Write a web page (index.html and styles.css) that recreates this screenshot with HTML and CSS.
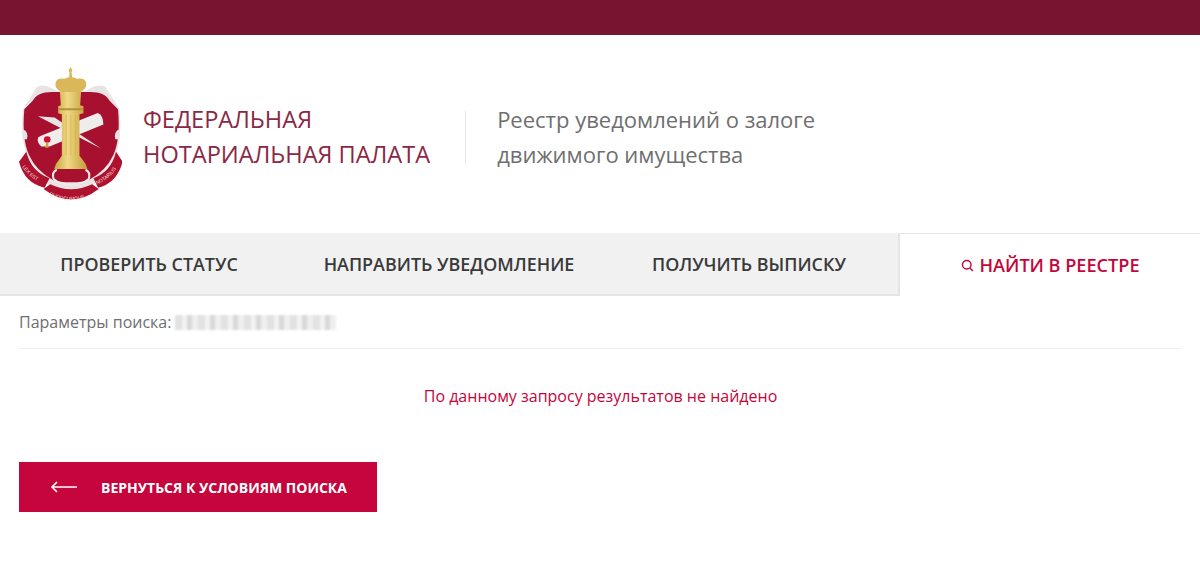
FILE: index.html
```html
<!DOCTYPE html>
<html lang="ru">
<head>
    <meta charset="UTF-8">
    <meta name="viewport" content="width=device-width, initial-scale=1.0">
    <title>Реестр уведомлений о залоге движимого имущества</title>
    <link rel="stylesheet" href="styles.css">
</head>
<body>
    <div class="top-bar"></div>

    <header class="header">
        <svg class="logo" viewBox="58 45 310 412" aria-hidden="true">
            <defs>
                <linearGradient id="gold" x1="0" x2="1" y1="0" y2="0">
                    <stop offset="0" stop-color="#c9a640"/>
                    <stop offset="0.4" stop-color="#f0d885"/>
                    <stop offset="1" stop-color="#c39c38"/>
                </linearGradient>
                <path id="ribbonLeft" d="M68 345 Q90 380 135 398"/>
                <path id="ribbonMid" d="M148 430 Q212 462 282 430"/>
                <path id="ribbonRight" d="M292 398 Q335 382 360 335"/>
            </defs>
            <!-- щит -->
            <path d="M112 104 Q135 95 160 110 L175 118 L255 118 L270 110 Q295 95 318 104 L340 140 L360 172 Q370 260 345 320 L290 390 L265 425 L215 430 L165 425 L140 390 L85 320 Q60 260 70 172 L90 140 Z" fill="#e8e4e4"/>
            <path d="M74 172 L100 146 Q112 118 165 120 L265 120 Q318 118 330 146 L356 172 Q364 260 342 310 Q320 358 268 385 Q250 392 215 392 Q180 392 160 385 Q110 358 88 310 Q66 260 74 172 Z" fill="#a8102f"/>
            <!-- завитки -->
            <path d="M172 354 Q156 360 162 382 Q180 398 215 400 Q250 398 268 382 Q274 360 258 354" fill="none" stroke="#eeeaea" stroke-width="6"/>
            <path d="M70 232 Q88 240 82 262 L68 262 Z M360 232 Q342 240 348 262 L362 262 Z" fill="#e8e4e4"/>
            <!-- перо -->
            <path d="M115 193 L165 197 L305 290 L170 222 Z" fill="#e6e4e4"/>
            <!-- свиток -->
            <path d="M128 250 L295 183 Q312 190 312 218 L150 284 L125 284 Q110 270 116 256 Z" fill="#efecec"/>
            <circle cx="143" cy="263" r="10" fill="#d01030"/>
            <path d="M140 272 L137 288 L147 288 L146 272 Z" fill="#c9a640"/>
            <!-- лента -->
            <path d="M80 300 Q95 360 150 380 L135 408 Q75 395 58 330 Z" fill="#af122e"/>
            <path d="M350 300 Q335 360 282 380 L296 408 Q352 395 370 330 Z" fill="#af122e"/>
            <path d="M132 412 L152 398 Q215 428 278 398 L298 412 Q215 475 132 412 Z" fill="#af122e"/>
            <text class="logo-motto"><textPath href="#ribbonLeft">LEX EST</textPath></text>
            <text class="logo-motto"><textPath href="#ribbonMid">QUODCUMQUE</textPath></text>
            <text class="logo-motto"><textPath href="#ribbonRight">NOTARIUS</textPath></text>
            <!-- колонна -->
            <path d="M164 352 Q168 335 178 325 L187 312 L187 187 L176 184 L176 163 L184 160 L181 120 L245 120 L242 160 L252 163 L252 184 L240 187 L240 312 L250 325 Q260 335 264 352 Z" fill="url(#gold)"/>
            <path d="M200 188 V310 M214 188 V310 M228 188 V310" stroke="#d3b04e" stroke-width="2" fill="none"/>
            <path d="M178 172 H250" stroke="#b3913a" stroke-width="6" fill="none"/>
            <!-- корона -->
            <path d="M185 120 Q165 110 168 92 Q172 76 195 80 Q214 70 233 80 Q256 76 260 92 Q263 110 243 120 Z" fill="#d9b75a"/>
            <path d="M209 76 L210 60 L207 55 L213 45 L219 55 L216 60 L218 76 Z" fill="#d9b75a"/>
        </svg>
        <div class="org-name">ФЕДЕРАЛЬНАЯ<br>НОТАРИАЛЬНАЯ ПАЛАТА</div>
        <div class="divider"></div>
        <div class="reg-name">Реестр уведомлений о залоге<br>движимого имущества</div>
    </header>

    <nav class="tabs">
        <a class="tab tab-status" href="#">ПРОВЕРИТЬ СТАТУС</a>
        <a class="tab tab-send" href="#">НАПРАВИТЬ УВЕДОМЛЕНИЕ</a>
        <a class="tab tab-extract" href="#">ПОЛУЧИТЬ ВЫПИСКУ</a>
        <a class="tab tab-active" href="#">
            <svg class="search-icon" viewBox="0 0 14 14" aria-hidden="true">
                <circle cx="6.2" cy="6.2" r="4.6"/>
                <path d="M9.6 9.6 L12.8 12.8"/>
            </svg>
            НАЙТИ В РЕЕСТРЕ
        </a>
    </nav>

    <main class="content">
        <div class="params">
            <span>Параметры поиска:</span>
            <span class="blurred"></span>
        </div>
        <p class="no-results">По данному запросу результатов не найдено</p>
        <a class="back-btn" href="#">
            <svg class="back-arrow" viewBox="0 0 28 12" aria-hidden="true">
                <path d="M27 6 H2 M7 1 L2 6 L7 11"/>
            </svg>
            ВЕРНУТЬСЯ К УСЛОВИЯМ ПОИСКА
        </a>
    </main>
</body>
</html>
```

FILE: styles.css
```css
/* общие */
html, body {
    margin: 0;
    padding: 0;
    background: #fff;
    font-family: "Open Sans", sans-serif;
    overflow: hidden;
}

a {
    text-decoration: none;
}

.top-bar {
    height: 35px;
    background: #781330;
}

/* шапка */
.header {
    height: 198px;
    display: flex;
    align-items: center;
    padding-left: 19px;
    box-sizing: border-box;
}

.logo {
    width: 103px;
    height: 137px;
    flex: none;
    margin-top: 2px;
}

.logo-motto {
    font-family: "Liberation Sans", sans-serif;
    font-size: 15px;
    fill: #f3dcdc;
}

.org-name {
    margin: 6px 35px 0 21px;
    font-size: 23.6px;
    line-height: 35px;
    color: #8a2845;
    white-space: nowrap;
}

.divider {
    width: 1px;
    height: 53px;
    margin-top: 6px;
    background: #e6e6e6;
}

.reg-name {
    margin: 6px 0 0 31px;
    font-size: 22px;
    line-height: 35px;
    color: #6f6f6f;
    white-space: nowrap;
}

/* вкладки */
.tabs {
    display: flex;
    height: 63px;
    background: #f1f1f1;
    border-bottom: 2px solid #e4e4e4;
    box-sizing: border-box;
}

.tab {
    display: flex;
    align-items: center;
    justify-content: center;
    font-size: 17.9px;
    font-weight: 600;
    color: #3a3a3a;
    white-space: nowrap;
}

.tab-status {
    width: 298px;
}

.tab-send {
    width: 302px;
}

.tab-extract {
    width: 298px;
}

.tab-active {
    flex: 1;
    gap: 6px;
    margin-bottom: -2px;
    background: #fff;
    border-left: 2px solid #e4e4e4;
    border-top: 1px solid #e4e4e4;
    color: #c5053c;
    box-sizing: border-box;
    font-size: 18.1px;
}

.search-icon {
    width: 13px;
    height: 13px;
    fill: none;
    stroke: #c5053c;
    stroke-width: 1.5;
}

/* результаты */
.content {
    padding: 0 18px 0 19px;
}

.params {
    display: flex;
    align-items: center;
    gap: 4px;
    height: 52px;
    border-bottom: 1px solid #eee;
    font-size: 16px;
    color: #6f6f6f;
}

.blurred {
    width: 161px;
    height: 15px;
    background: repeating-linear-gradient(90deg, #e2e2e2 0 7px, #f2f2f2 7px 12px, #d8d8d8 12px 17px, #efefef 17px 23px);
    filter: blur(1px);
}

.no-results {
    margin: 36px 0 55px;
    height: 22px;
    line-height: 22px;
    text-align: center;
    font-size: 16px;
    color: #c5053c;
}

.back-btn {
    display: flex;
    align-items: center;
    width: 358px;
    height: 50px;
    background: #c5053c;
    color: #fff;
    font-size: 14px;
    font-weight: 700;
    white-space: nowrap;
}

.back-arrow {
    width: 28px;
    height: 12px;
    margin: 0 23px 0 31px;
    fill: none;
    stroke: #fff;
    stroke-width: 1.6;
    flex: none;
}
```
